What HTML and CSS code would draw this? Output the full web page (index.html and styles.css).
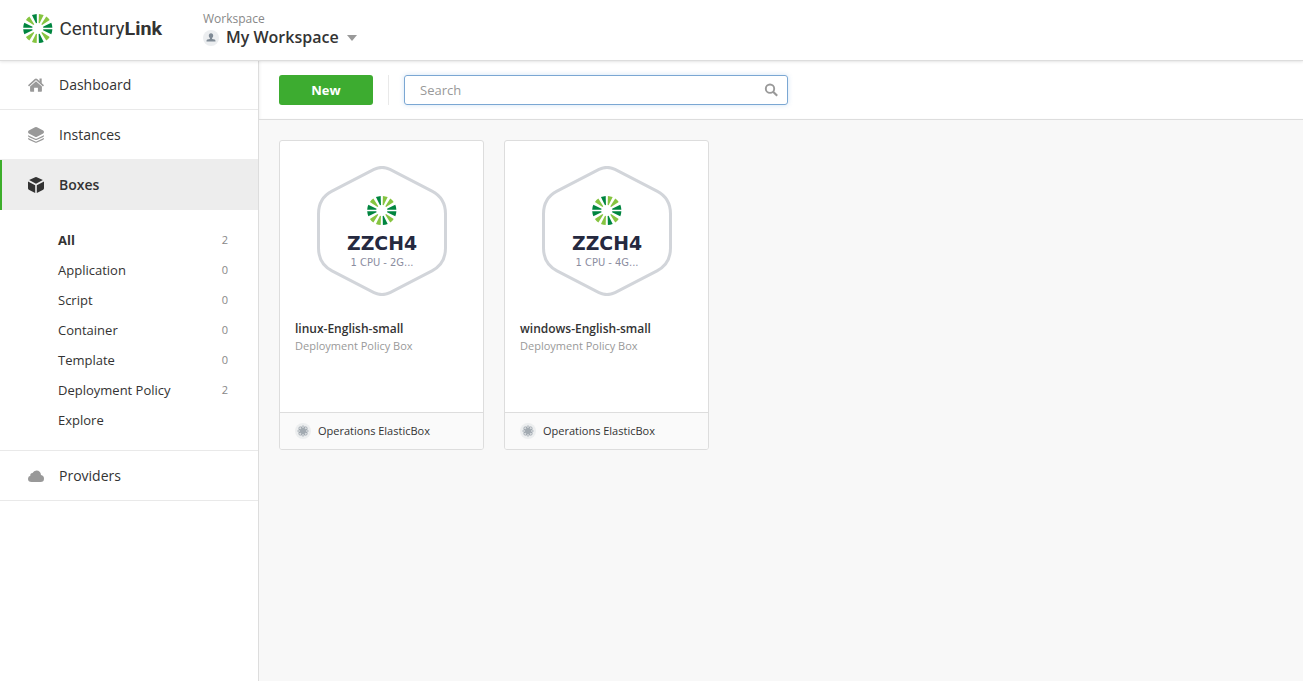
FILE: index.html
```
<!DOCTYPE html>
<html lang="en">
<head>
<meta charset="utf-8">
<title>Boxes</title>
<link rel="stylesheet" href="styles.css">
</head>
<body>
<svg class="defs" aria-hidden="true">
  <defs>
    <path id="wedge" d="M5.500 -.5L14.400 -2.450A14.600 14.600 0 0 1 14.400 2.450L5.500 .5Z"/>
    <g id="burst">
      <g fill="#00853f">
        <use href="#wedge" transform="rotate(13)"/><use href="#wedge" transform="rotate(-13)"/>
        <use href="#wedge" transform="rotate(167)"/><use href="#wedge" transform="rotate(193)"/>
        <use href="#wedge" transform="rotate(76)"/><use href="#wedge" transform="rotate(256)"/>
      </g>
      <g fill="#86c440">
        <use href="#wedge" transform="rotate(45)"/><use href="#wedge" transform="rotate(104)"/>
        <use href="#wedge" transform="rotate(135)"/><use href="#wedge" transform="rotate(225)"/>
        <use href="#wedge" transform="rotate(284)"/><use href="#wedge" transform="rotate(315)"/>
      </g>
    </g>
    <g id="hexagon">
      <path d="M57 3.400Q65 -.6 73 3.400L115 25.200Q128.500 32.200 128.500 48V82Q128.500 97.800 115 104.800L73 126.600Q65 130.600 57 126.600L15 104.800Q1.500 97.800 1.500 82V48Q1.500 32.200 15 25.200Z" fill="#fff" stroke="#d2d5da" stroke-width="3"/>
      <use href="#burst" transform="translate(64.800 44.500)"/>
    </g>
    <g id="atom">
      <circle cx="8" cy="8" r="8" fill="#eceeef"/>
      <g fill="none" stroke="#98a1a9" stroke-width=".8">
        <ellipse cx="8" cy="8" rx="5.300" ry="2"/><ellipse cx="8" cy="8" rx="5.300" ry="2" transform="rotate(45 8 8)"/>
        <ellipse cx="8" cy="8" rx="5.300" ry="2" transform="rotate(90 8 8)"/><ellipse cx="8" cy="8" rx="5.300" ry="2" transform="rotate(135 8 8)"/>
      </g>
      <circle cx="8" cy="8" r="2.800" fill="#a2aab1"/>
    </g>
  </defs>
</svg>

<header class="header">
  <svg class="logo" width="142" height="32" viewBox="0 0 142 32">
    <use href="#burst" transform="translate(15.800 15.500)"/>
    <text class="logo-text" x="37.500" y="22" textLength="65" lengthAdjust="spacingAndGlyphs">Century</text>
    <text class="logo-text logo-strong" x="102.500" y="22" textLength="37.500" lengthAdjust="spacingAndGlyphs">Link</text>
  </svg>
  <div class="workspace">
    <span class="workspace-label">Workspace</span>
    <div class="workspace-name">
      <svg class="avatar" width="16" height="16" viewBox="0 0 16 16"><circle cx="8" cy="8" r="8" fill="#eceef0"/><path d="M8 3.300c1.500 0 2.200 1 2.200 2.300 0 1-.5 1.900-1.100 2.500v.9l2.500.6c.6.200.9.700.9 1.900h-9c0-1.200.3-1.700.9-1.900L6.900 9v-.9c-.6-.6-1.100-1.500-1.100-2.500 0-1.300.7-2.300 2.200-2.300z" fill="#7f8a95"/></svg>
      <span>My Workspace</span>
      <svg class="caret" width="10" height="6" viewBox="0 0 10 6"><path d="M0 0h10L5 6z" fill="#999"/></svg>
    </div>
  </div>
</header>

<div class="layout">
  <nav class="sidebar">
    <a class="nav-item nav-first">
      <svg width="16" height="16" viewBox="0 0 16 16" fill="#999"><path d="M8 4.300l5.900 5.200V14q0 .7-.7.700H9.900v-4H6.100v4H2.800q-.7 0-.7-.7V9.500z"/><path d="M.5 8.900L7.300 2.700q.7-.6 1.400 0l6.800 6.200" fill="none" stroke="#999" stroke-width="1.600"/><path d="M11.500 1.500h2.200v5l-2.200-1.800z"/></svg>
      <span>Dashboard</span>
    </a>
    <a class="nav-item">
      <svg width="16" height="16" viewBox="0 0 16 16" fill="#999"><path d="M7 .3q1-.5 2 0l6.200 3.100q1.600 1.600 0 3.200L9 9.700q-1 .5-2 0L.8 6.600Q-.8 5 .8 3.400z"/><path d="M.2 8.600Q.8 9.300 1.500 9.600L7.200 12.200q.8.400 1.600 0l5.700-2.600q.7-.3 1.300-1M.2 11.400Q.8 12.100 1.500 12.400L7.200 15q.8.400 1.600 0l5.700-2.600q.7-.3 1.300-1" fill="none" stroke="#999" stroke-width="1.200"/></svg>
      <span>Instances</span>
    </a>
    <a class="nav-item nav-active">
      <svg width="16" height="16" viewBox="0 0 16 16" fill="#333"><path d="M1.100 3.100L7.200.3q.8-.4 1.600 0l6.100 2.800L8 6.700z"/><path d="M0 4.500l7.200 3.700V16l-6.400-3.300Q0 12.200 0 11.300zM16 4.500L8.800 8.200V16l6.400-3.300q.8-.5.8-1.400z"/></svg>
      <span>Boxes</span>
    </a>
    <div class="subnav">
      <a class="sub-item sub-active"><span>All</span><span class="count">2</span></a>
      <a class="sub-item"><span>Application</span><span class="count">0</span></a>
      <a class="sub-item"><span>Script</span><span class="count">0</span></a>
      <a class="sub-item"><span>Container</span><span class="count">0</span></a>
      <a class="sub-item"><span>Template</span><span class="count">0</span></a>
      <a class="sub-item"><span>Deployment Policy</span><span class="count">2</span></a>
      <a class="sub-item"><span>Explore</span></a>
    </div>
    <a class="nav-item">
      <svg width="16" height="16" viewBox="0 0 16 16" fill="#999"><path d="M3.600 14Q0 14 0 10.800 0 8.400 2.300 7.700 2.100 5.200 4.500 5.100 5.800 2.600 8.500 2.600c2.600 0 4.300 1.700 4.500 4.500Q16 7.700 16 10.700 16 14 12.500 14z"/></svg>
      <span>Providers</span>
    </a>
  </nav>

  <main class="main">
    <div class="toolbar">
      <button class="new-button">New</button>
      <div class="divider"></div>
      <div class="search">
        <span>Search</span>
        <svg width="14" height="14" viewBox="0 0 14 14" fill="none" stroke="#999"><circle cx="6" cy="5.700" r="4.200" stroke-width="1.900"/><path d="M9.100 8.800l4.100 4" stroke-width="2.200"/></svg>
      </div>
    </div>
    <div class="cards">
      <article class="card">
        <svg class="badge" width="130" height="130" viewBox="0 0 130 130">
          <use href="#hexagon"/>
          <text class="badge-title" x="65" y="84" textLength="70" lengthAdjust="spacingAndGlyphs">ZZCH4</text>
          <text class="badge-sub" x="65" y="100" textLength="63" lengthAdjust="spacingAndGlyphs">1 CPU - 2G...</text>
        </svg>
        <div class="card-text"><h2>linux-English-small</h2><p>Deployment Policy Box</p></div>
        <footer><svg width="16" height="16"><use href="#atom"/></svg><span>Operations ElasticBox</span></footer>
      </article>
      <article class="card">
        <svg class="badge" width="130" height="130" viewBox="0 0 130 130">
          <use href="#hexagon"/>
          <text class="badge-title" x="65" y="84" textLength="70" lengthAdjust="spacingAndGlyphs">ZZCH4</text>
          <text class="badge-sub" x="65" y="100" textLength="63" lengthAdjust="spacingAndGlyphs">1 CPU - 4G...</text>
        </svg>
        <div class="card-text"><h2>windows-English-small</h2><p>Deployment Policy Box</p></div>
        <footer><svg width="16" height="16"><use href="#atom"/></svg><span>Operations ElasticBox</span></footer>
      </article>
    </div>
  </main>
</div>
</body>
</html>
```
FILE: styles.css
```
* { box-sizing: border-box; }
body {
  margin: 0;
  height: 681px;
  overflow: hidden;
  display: flex;
  flex-direction: column;
  font-family: "Open Sans", sans-serif;
  color: #333;
  background: #fff;
}
svg { display: block; flex: none; }
.defs { position: absolute; width: 0; height: 0; }

.header {
  position: relative;
  z-index: 1;
  flex: none;
  height: 61px;
  display: flex;
  align-items: flex-start;
  padding: 12px 22px;
  border-bottom: 1px solid #ddd;
  box-shadow: 0 1px 3px rgba(0, 0, 0, .1);
  background: #fff;
}
.logo { margin-top: 1px; }
.logo-text { font: 18.500px Roboto, sans-serif; fill: #333; }
.logo-strong { font-weight: 700; }
.workspace { margin-left: 39px; }
.workspace-label { display: block; font-size: 12px; line-height: 14px; color: #888; }
.workspace-name {
  display: flex;
  align-items: center;
  height: 22px;
  font-size: 16px;
  font-weight: 600;
}
.workspace-name span { margin: 0 8px 0 7px; }
.avatar, .caret { margin-top: 2px; }

.layout { flex: 1; display: flex; }
.sidebar { width: 259px; flex: none; border-right: 1px solid #ddd; }
.nav-item {
  display: flex;
  align-items: center;
  height: 50px;
  padding-left: 28px;
  border-bottom: 1px solid #e9e9e9;
  font-size: 14px;
}
.nav-item span { margin-left: 15px; }
.nav-first { height: 49px; padding-bottom: 1px; }
.nav-active {
  padding-left: 26px;
  background: #ededed;
  border-left: 2px solid #3dae2b;
  border-bottom: 0;
  box-shadow: 0 -1px #ededed;
}
.nav-active span { padding-bottom: 2px; font-weight: 600; }
.subnav { height: 241px; padding: 15px 30px 0 58px; border-bottom: 1px solid #e9e9e9; }
.sub-item {
  display: flex;
  align-items: center;
  justify-content: space-between;
  height: 30px;
  font-size: 13px;
}
.sub-active { font-weight: 700; }
.count { padding-bottom: 2px; font-size: 11px; font-weight: 400; color: #888; }

.main {
  flex: 1;
  background: #f8f8f8;
}
.toolbar {
  display: flex;
  align-items: center;
  height: 59px;
  padding-left: 20px;
  background: #fff;
  border-bottom: 1px solid #ddd;
  box-shadow: inset 2px 0 3px -1px rgba(0, 0, 0, .06);
}
.new-button {
  width: 94px;
  height: 30px;
  padding: 0;
  border: 0;
  border-radius: 3px;
  background: #3dac30;
  color: #fff;
  font: 700 13px "Open Sans", sans-serif;
}
.divider { width: 1px; height: 30px; margin: 0 15px; background: #e9e9e9; }
.search {
  display: flex;
  align-items: center;
  justify-content: space-between;
  width: 384px;
  height: 30px;
  padding: 0 9px 0 15px;
  border: 1px solid #7ba7d3;
  border-radius: 3px;
  box-shadow: 0 0 5px rgba(100, 160, 220, .3);
  color: #999;
  font-size: 13px;
}
.cards { display: flex; gap: 20px; padding: 20px; }
.card {
  display: flex;
  flex-direction: column;
  width: 205px;
  height: 310px;
  border: 1px solid #ddd;
  border-radius: 3px;
  background: #fff;
  overflow: hidden;
}
.badge { margin: 25px 0 0 37px; }
.badge-title { font: 700 19px "DejaVu Sans", sans-serif; fill: #25293f; text-anchor: middle; }
.badge-sub { font: 11px "DejaVu Sans", sans-serif; fill: #8b8d9f; text-anchor: middle; }
.card-text { padding: 24px 15px 0; }
.card h2 { margin: 0; font-size: 12px; line-height: 18px; font-weight: 600; }
.card p { margin: 0; font-size: 11px; line-height: 15px; color: #999; }
.card footer {
  display: flex;
  align-items: center;
  gap: 7px;
  height: 37px;
  margin-top: auto;
  padding-left: 15px;
  border-top: 1px solid #ddd;
  background: #fafafa;
  font-size: 11px;
}
.card footer span { padding-bottom: 2px; }
```
